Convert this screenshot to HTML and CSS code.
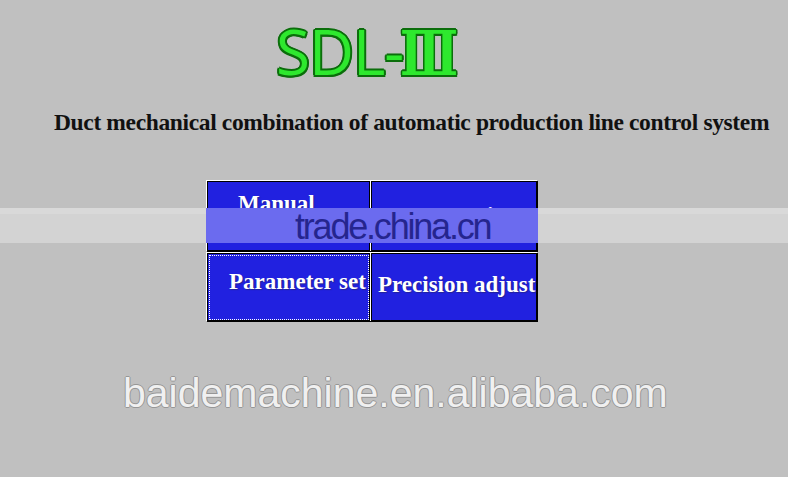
FILE: index.html
```html
<!DOCTYPE html>
<html>
<head>
<meta charset="utf-8">
<link rel="stylesheet" href="styles.css">
</head>
<body>
<div class="screen">
  <h1 class="title">SDL-<span class="roman">Ⅲ</span></h1>
  <p class="subtitle">Duct mechanical combination of automatic production line control system</p>
  <div class="panel">
    <div class="btn btn-manual"><span>Manual</span></div>
    <div class="btn btn-auto"><span>Automatic</span></div>
    <div class="btn btn-param focused"><span>Parameter set</span></div>
    <div class="btn btn-prec"><span>Precision adjust</span></div>
  </div>
  <p class="footer">baidemachine.en.alibaba.com</p>
  <div class="band">
    <div class="band-blue"></div>
    <span class="band-text">trade.china.cn</span>
  </div>
</div>
</body>
</html>
```
FILE: styles.css
```css
html, body {
  margin: 0;
  padding: 0;
}
body {
  background: #c0c0c0;
  width: 788px;
  height: 477px;
  overflow: hidden;
}
.screen {
  position: relative;
  width: 788px;
  height: 477px;
  background: #c0c0c0;
}
.title {
  margin: 0;
  padding: 20px 0 0 276px;
  height: 62px;
  font-family: "Open Sans", "DejaVu Sans", sans-serif;
  font-weight: 400;
  font-size: 62px;
  line-height: 62px;
  color: #2ee82e;
  text-shadow:
    -2px 0 0 #0b6e0b, 2px 0 0 #0b6e0b, 0 -2px 0 #0b6e0b, 0 2px 0 #0b6e0b,
    -1.5px -1.5px 0 #0b6e0b, 1.5px -1.5px 0 #0b6e0b, -1.5px 1.5px 0 #0b6e0b, 1.5px 1.5px 0 #0b6e0b;
  letter-spacing: -1px;
  white-space: nowrap;
}
.roman {
  display: inline-block;
  font-family: "DejaVu Serif", serif;
  font-weight: 700;
  letter-spacing: 0;
  margin-left: -3px;
  transform: scaleX(0.77);
  transform-origin: left center;
}
.subtitle {
  margin: 0;
  padding: 28px 0 0 54px;
  height: 30px;
  font-family: "Liberation Serif", "Times New Roman", serif;
  font-weight: 700;
  font-size: 23.5px;
  line-height: 24px;
  letter-spacing: -0.36px;
  color: #111;
  white-space: nowrap;
}
.panel {
  margin: 41px 0 0 207px;
  display: grid;
  grid-template-columns: 164px 167px;
  grid-template-rows: 71px 70px;
  width: 331px;
}
.btn {
  box-sizing: border-box;
  background: #2121e0;
  border: 1px solid #000;
  border-right-width: 2px;
  border-bottom-width: 2px;
  box-shadow: -1px -1px 0 #fff;
  font-family: "Liberation Serif", "Times New Roman", serif;
  font-weight: 700;
  font-size: 23px;
  line-height: 22px;
  color: #fff;
  text-shadow: 1px 1px 1px rgba(40, 40, 90, 0.55);
  white-space: nowrap;
}
.btn-manual { padding: 11px 0 0 30px; }
.btn-auto { padding: 23px 0 0 28px; }
.btn-param { padding: 17px 0 0 21px; margin-top: 1px; }
.btn-prec { padding: 20px 0 0 6px; margin-top: 1px; }
.focused {
  outline: 1px dotted #fff;
  outline-offset: -3px;
}
.footer {
  margin: 0;
  padding: 48px 0 0 123px;
  font-family: "Liberation Sans", Arial, sans-serif;
  font-size: 41px;
  line-height: 46px;
  color: #f0f0f0;
  text-shadow:
    -1px 0 0 #969696, 1px 0 0 #969696, 0 -1px 0 #969696, 0 1px 0 #969696;
  white-space: nowrap;
}
.band {
  position: absolute;
  left: 0;
  top: 208px;
  width: 788px;
  height: 35px;
  box-sizing: border-box;
  background: #d3d3d3;
  border-top: 6px solid #d9d9d9;
}
.band-blue {
  position: absolute;
  left: 206px;
  top: -6px;
  width: 332px;
  height: 35px;
  background: #6b6bef;
}
.band-text {
  position: absolute;
  left: 295px;
  top: -7px;
  font-family: "Liberation Sans", Arial, sans-serif;
  font-size: 36px;
  line-height: 40px;
  letter-spacing: -2.2px;
  color: #25258e;
  white-space: nowrap;
}
```
